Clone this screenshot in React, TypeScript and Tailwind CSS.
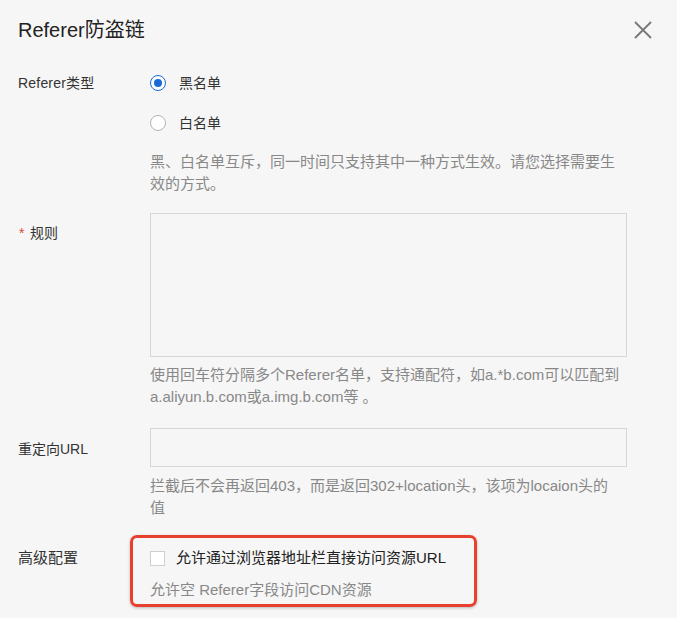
import React from 'react';

const font = { fontFamily: '"Liberation Sans", "Noto Sans CJK SC", sans-serif' };

function Radio({ checked, label }: { checked?: boolean; label: string }) {
  return (
    <label className="flex items-center h-6 cursor-pointer">
      {checked ? (
        <span className="w-4 h-4 rounded-full border-[1.5px] border-[#1769d8] bg-white flex items-center justify-center">
          <span className="w-2 h-2 rounded-full bg-[#1769d8]" />
        </span>
      ) : (
        <span className="w-4 h-4 rounded-full border border-[#b3b3b3] bg-white" />
      )}
      <span className="ml-[13px] text-[14px] text-[#333]">{label}</span>
    </label>
  );
}

export default function App() {
  return (
    <div className="w-[677px] min-h-[618px] bg-[#f6f6f6] text-[#333]" style={font}>
      <div className="flex items-center justify-between pt-[16px] pl-[18px] pr-[24px]">
        <h2 className="text-[20px] leading-[28px] text-[#222]">Referer防盗链</h2>
        <button className="w-5 h-5 flex items-center justify-center text-[#777]">
          <svg width="18" height="18" viewBox="0 0 18 18" fill="none" stroke="currentColor" strokeWidth="1.8">
            <path d="M1 1 L17 17 M17 1 L1 17" />
          </svg>
        </button>
      </div>

      <div className="px-[18px]">
        <div className="flex mt-[27px]">
          <div className="w-[132px] shrink-0 text-[14px] leading-6 tracking-[0.2px]">Referer类型</div>
          <div className="flex-1 pr-[32px]">
            <div className="flex flex-col gap-4">
              <Radio checked label="黑名单" />
              <Radio label="白名单" />
            </div>
            <p className="mt-4 text-[15px] leading-[22px] text-[#888]">
              黑、白名单互斥，同一时间只支持其中一种方式生效。请您选择需要生效的方式。
            </p>
          </div>
        </div>

        <div className="flex mt-[18px]">
          <div className="w-[132px] shrink-0 text-[14px] leading-6 pt-[8px] flex">
            <span className="text-[#e0463a] w-[12px] pl-[1px] leading-6">*</span>
            <span>规则</span>
          </div>
          <div className="flex-1 pr-[32px]">
            <textarea className="block w-full h-[144px] border border-[#d6d6d6] bg-transparent resize-none outline-none" />
            <p className="mt-[7px] text-[15px] leading-[22px] text-[#888]">
              使用回车符分隔多个Referer名单，支持通配符，如a.*b.com可以匹配到a.aliyun.b.com或a.img.b.com等 。
            </p>
          </div>
        </div>

        <div className="flex mt-[20px]">
          <div className="w-[132px] shrink-0 text-[14px] leading-6 pt-[9px]">重定向URL</div>
          <div className="flex-1 pr-[32px]">
            <input className="block w-full h-[39px] border border-[#d6d6d6] bg-transparent outline-none" />
            <p className="mt-[8px] text-[15px] leading-[22px] text-[#888]">
              拦截后不会再返回403，而是返回302+location头，该项为locaion头的
              <br />
              值
            </p>
          </div>
        </div>

        <div className="flex mt-[16px]">
          <div className="w-[112px] shrink-0 text-[15px] leading-6 pt-[11px]">高级配置</div>
          <div className="w-[347px] h-[72px] border-[3px] border-[#e8402e] rounded-[7px] shadow-[0_1px_3px_rgba(0,0,0,0.25)] pl-[17px] pt-[8px]">
            <label className="flex items-center h-6">
              <span className="w-[15px] h-[15px] border border-[#cfcfcf] bg-white" />
              <span className="ml-[11px] text-[15px] text-[#222]">允许通过浏览器地址栏直接访问资源URL</span>
            </label>
            <p className="mt-[9px] text-[15px] leading-[22px] text-[#888]">允许空 Referer字段访问CDN资源</p>
          </div>
        </div>
      </div>
    </div>
  );
}
